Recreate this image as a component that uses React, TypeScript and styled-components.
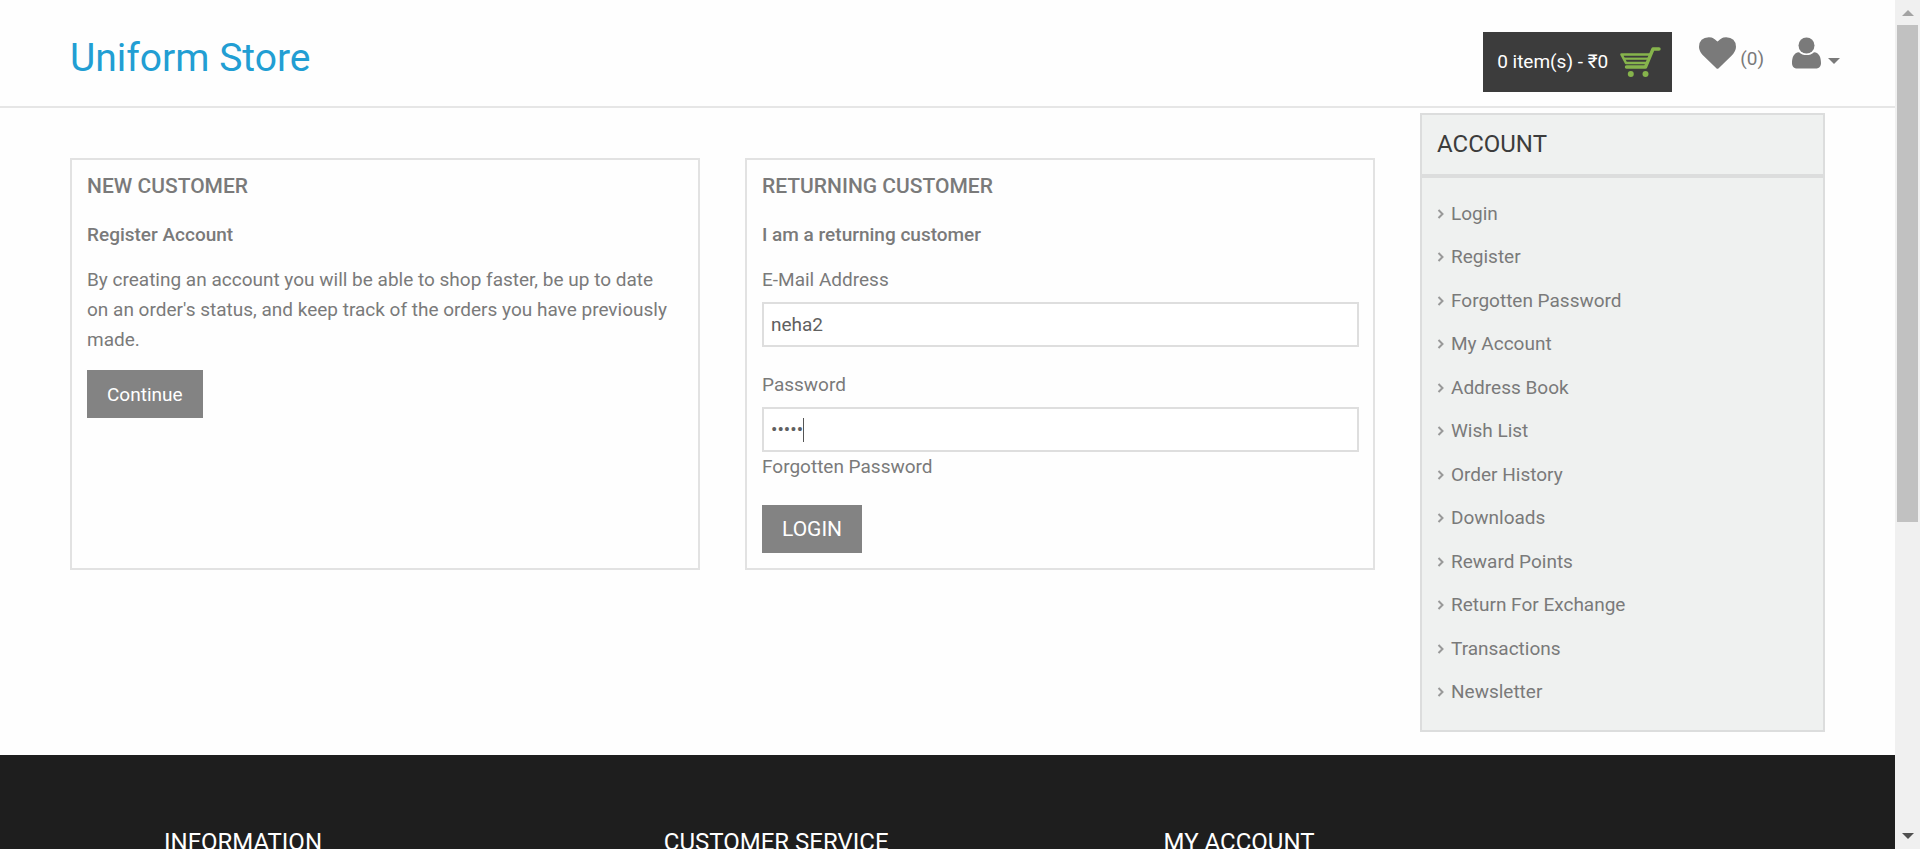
import React from "react";
import styled, { createGlobalStyle, css } from "styled-components";

const colors = {
  text: "#7a7a7a",
  dark: "#3c3c3c",
  border: "#e2e2e2",
  brand: "#229ed3",
  footer: "#1e1e1e",
};

const GlobalStyle = createGlobalStyle`
  *, *::before, *::after { box-sizing: border-box; }
  body {
    margin: 0;
    background: #fefefe;
    color: ${colors.text};
    font-family: Roboto, "Liberation Sans", sans-serif;
    font-size: 19px;
    line-height: 30px;
  }
  h1, h2, h3, p, ul { margin: 0; padding: 0; }
  ul { list-style: none; }
  a { color: inherit; text-decoration: none; }
  button, input { font-family: inherit; }
`;

const Window = styled.div`
  display: flex;
  height: 100vh;
  overflow: hidden;
`;

const Page = styled.div`
  flex: 1;
  min-width: 0;
  overflow: hidden;
`;

const Header = styled.header`
  display: flex;
  justify-content: space-between;
  align-items: flex-start;
  padding: 32px 55px 14px 70px;
  border-bottom: 2px solid #e6e6e6;
`;

const Brand = styled.h1`
  padding-top: 4px;
  color: ${colors.brand};
  font-size: 39px;
  font-weight: 400;
  line-height: 44px;
`;

const HeaderActions = styled.div`
  display: flex;
  align-items: flex-start;
`;

const CartButton = styled.button`
  display: flex;
  align-items: center;
  gap: 12px;
  height: 60px;
  margin-right: 27px;
  padding: 0 11px 0 14px;
  border: 0;
  background: ${colors.dark};
  color: #fff;
  font-size: 19px;
`;

const CartTotal = styled.span`
  padding-bottom: 2px;
`;

const HeaderLink = styled.a`
  display: flex;
  align-items: flex-start;
  gap: 4px;
  padding-top: 5px;
  margin-right: 28px;
`;

const Count = styled.span`
  padding-top: 7px;
`;

const AccountMenu = styled.button`
  display: flex;
  align-items: flex-start;
  gap: 7px;
  padding: 5px 0 0;
  border: 0;
  background: none;
  color: ${colors.text};
`;

const Caret = styled.svg`
  margin-top: 21px;
`;

const Main = styled.main`
  display: flex;
  align-items: flex-start;
  gap: 45px;
  padding: 5px 70px 23px;
`;

const Panels = styled.div`
  flex: 1;
  display: grid;
  grid-template-columns: 1fr 1fr;
  gap: 45px;
  padding-top: 45px;
`;

const Panel = styled.section`
  padding: 12px 14px 15px 15px;
  border: 2px solid ${colors.border};
`;

const PanelTitle = styled.h2`
  margin-bottom: 19px;
  font-size: 21px;
  font-weight: 500;
  line-height: 29px;
`;

const PanelLead = styled.p`
  margin-bottom: 15px;
  font-weight: 500;
`;

const PanelText = styled.p`
  margin-bottom: 15px;
  padding-right: 10px;
`;

const Button = styled.button<{ $large?: boolean }>`
  display: block;
  height: 48px;
  padding: 0 20px;
  border: 0;
  background: #838383;
  color: #fff;
  font-size: ${(p) => (p.$large ? "21px" : "19px")};
`;

const Field = styled.div<{ $spaced?: boolean }>`
  position: relative;
  ${(p) =>
    p.$spaced &&
    css`
      margin-bottom: 23px;
    `}
`;

const Label = styled.label`
  display: block;
  margin-bottom: 7px;
`;

const Input = styled.input`
  display: block;
  width: 100%;
  height: 45px;
  padding: 0 7px;
  border: 2px solid #dedede;
  border-radius: 0;
  outline: 0;
  background: #fff;
  color: #606060;
  font-size: 19px;
`;

const TextCursor = styled.span`
  position: absolute;
  left: 41px;
  bottom: 10px;
  width: 1px;
  height: 24px;
  background: #555;
`;

const ForgottenLink = styled.a`
  display: block;
  margin-bottom: 23px;
`;

const Sidebar = styled.aside`
  width: 405px;
  border: 2px solid #dcdddd;
  background: #eff1f0;
`;

const SidebarTitle = styled.h3`
  padding: 14px 15px 15px;
  border-bottom: 4px solid #dcdddd;
  color: ${colors.dark};
  font-size: 24px;
  font-weight: 400;
  line-height: 30px;
`;

const SidebarList = styled.ul`
  display: grid;
  grid-auto-rows: 1fr;
  min-height: 522px;
  margin: 14px 15px 16px;
`;

const SidebarItem = styled.li`
  display: flex;
  align-items: center;
`;

const SidebarLink = styled.a`
  display: flex;
  align-items: center;
  gap: 6px;
`;

const Footer = styled.footer`
  display: flex;
  min-height: 400px;
  padding: 72px 65px 40px 164px;
  background: ${colors.footer};
`;

const FooterColumn = styled.section`
  width: 30%;
`;

const FooterTitle = styled.h3`
  color: #fff;
  font-size: 24px;
  font-weight: 400;
`;

const ScrollTrack = styled.div`
  display: flex;
  flex-direction: column;
  align-items: center;
  width: 25px;
  height: 100%;
  padding: 10px 0;
  background: #f0f0f0;
`;

const ScrollThumb = styled.div`
  width: 21px;
  height: 60%;
  margin: 9px 0 auto;
  background: #c1c1c1;
`;

const links = [
  "Login",
  "Register",
  "Forgotten Password",
  "My Account",
  "Address Book",
  "Wish List",
  "Order History",
  "Downloads",
  "Reward Points",
  "Return For Exchange",
  "Transactions",
  "Newsletter",
];

const CartIcon = () => (
  <svg width="41" height="32" viewBox="0 0 41 32" fill="none" stroke="#86b44c">
    <path d="M39 3H33L25.500 21H6.500" strokeWidth="3.400" strokeLinecap="round" strokeLinejoin="round" />
    <path d="M31 8.500H1.500L6 17H27" strokeWidth="2.600" strokeLinejoin="round" />
    <path d="M4 12.700H29" strokeWidth="2.200" />
    <circle cx="10.800" cy="28" r="3" fill="#86b44c" stroke="none" />
    <circle cx="25.500" cy="28" r="3" fill="#86b44c" stroke="none" />
  </svg>
);

const HeartIcon = () => (
  <svg width="37" height="32" viewBox="0 0 1792 1536" fill={colors.text}>
    <path d="M896 1536q-26 0-44-18l-624-602q-10-8-27.500-26t-55.500-65.500-68-97.500-53.500-121-23.500-138q0-220 127-344t351-124q62 0 126.500 21.500t120 58 95.500 68.500 76 68q36-36 76-68t95.500-68.500 120-58 126.500-21.500q224 0 351 124t127 344q0 221-229 450l-623 600q-18 18-44 18z" />
  </svg>
);

const UserIcon = () => (
  <svg width="29" height="32" viewBox="0 0 29 32" fill={colors.text}>
    <path d="M14.500 0.500a8 8 0 1 1 0 16a8 8 0 0 1 0-16z" />
    <path d="M7 15.200c2 1.900 4.600 2.900 7.500 2.900s5.500-1 7.500-2.900c5.300.3 7 5.400 7 10.800 0 3.300-2 5.500-5 5.500H5c-3 0-5-2.200-5-5.500 0-5.400 1.700-10.500 7-10.800z" />
  </svg>
);

const Chevron = () => (
  <svg width="8" height="10" viewBox="0 0 8 10" fill="none" stroke="#999" strokeWidth="2">
    <path d="M1.500 1L5.500 5L1.500 9" />
  </svg>
);

const App = () => (
  <>
    <GlobalStyle />
    <Window>
      <Page>
        <Header>
          <Brand>
            <a href="#home">Uniform Store</a>
          </Brand>
          <HeaderActions>
            <CartButton type="button">
              <CartTotal>0 item(s) - ₹0</CartTotal>
              <CartIcon />
            </CartButton>
            <HeaderLink href="#wishlist" aria-label="Wish List (0)">
              <HeartIcon />
              <Count>(0)</Count>
            </HeaderLink>
            <AccountMenu type="button" aria-label="My Account">
              <UserIcon />
              <Caret width="12" height="6" viewBox="0 0 12 6" fill={colors.text}>
                <path d="M0 0H12L6 6Z" />
              </Caret>
            </AccountMenu>
          </HeaderActions>
        </Header>

        <Main>
          <Panels>
            <Panel>
              <PanelTitle>NEW CUSTOMER</PanelTitle>
              <PanelLead>Register Account</PanelLead>
              <PanelText>
                By creating an account you will be able to shop faster, be up to date on an order's
                status, and keep track of the orders you have previously made.
              </PanelText>
              <Button type="button">Continue</Button>
            </Panel>
            <Panel>
              <PanelTitle>RETURNING CUSTOMER</PanelTitle>
              <PanelLead>I am a returning customer</PanelLead>
              <form onSubmit={(e) => e.preventDefault()}>
                <Field $spaced>
                  <Label htmlFor="email">E-Mail Address</Label>
                  <Input id="email" type="text" defaultValue="neha2" />
                </Field>
                <Field>
                  <Label htmlFor="password">Password</Label>
                  <Input id="password" type="password" defaultValue="neha2" />
                  <TextCursor />
                </Field>
                <ForgottenLink href="#forgotten">Forgotten Password</ForgottenLink>
                <Button type="submit" $large>
                  LOGIN
                </Button>
              </form>
            </Panel>
          </Panels>

          <Sidebar>
            <SidebarTitle>ACCOUNT</SidebarTitle>
            <SidebarList>
              {links.map((name) => (
                <SidebarItem key={name}>
                  <SidebarLink href="#account">
                    <Chevron />
                    {name}
                  </SidebarLink>
                </SidebarItem>
              ))}
            </SidebarList>
          </Sidebar>
        </Main>

        <Footer>
          {["INFORMATION", "CUSTOMER SERVICE", "MY ACCOUNT"].map((title) => (
            <FooterColumn key={title}>
              <FooterTitle>{title}</FooterTitle>
            </FooterColumn>
          ))}
        </Footer>
      </Page>

      <ScrollTrack aria-hidden="true">
        <svg width="12" height="6" viewBox="0 0 12 6" fill="#a3a3a3">
          <path d="M6 0L12 6H0Z" />
        </svg>
        <ScrollThumb />
        <svg width="12" height="6" viewBox="0 0 12 6" fill="#505050">
          <path d="M0 0H12L6 6Z" />
        </svg>
      </ScrollTrack>
    </Window>
  </>
);

export default App;
